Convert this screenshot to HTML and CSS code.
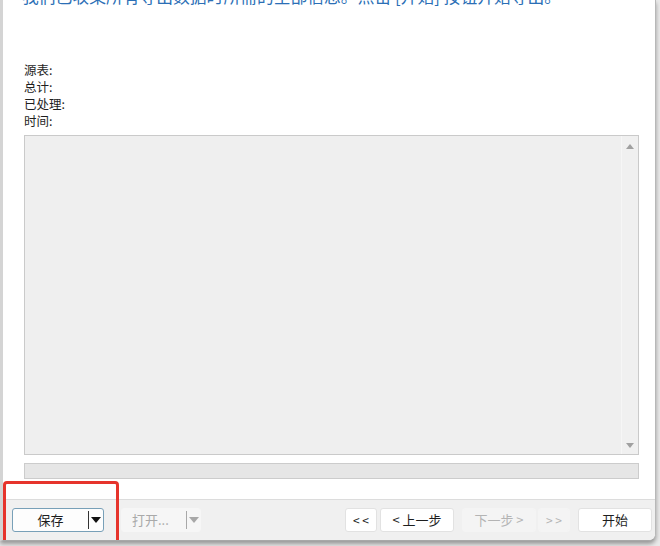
FILE: index.html
```html
<!DOCTYPE html>
<html lang="zh-CN">
<head>
    <meta charset="UTF-8">
    <title>导出向导</title>
    <link rel="stylesheet" href="styles.css">
</head>
<body>
    <!-- Wizard window -->
    <div class="window">
        <div class="content">
            <!-- Step description -->
            <p class="intro">我们已收集所有导出数据时所需的全部信息。点击 [开始] 按钮开始导出。</p>

            <!-- Export status -->
            <div class="status">
                <div class="status-line">源表:</div>
                <div class="status-line">总计:</div>
                <div class="status-line">已处理:</div>
                <div class="status-line">时间:</div>
            </div>

            <!-- Log output -->
            <div class="log-box">
                <div class="log-text"></div>
                <div class="scrollbar">
                    <span class="arrow arrow-up"></span>
                    <span class="arrow arrow-down"></span>
                </div>
            </div>

            <!-- Progress bar -->
            <div class="progress"></div>
        </div>

        <!-- Footer buttons -->
        <div class="footer">
            <div class="split-button">
                <span class="split-label">保存</span>
                <span class="split-arrow"><span class="caret"></span></span>
            </div>
            <div class="split-button disabled">
                <span class="split-label">打开...</span>
                <span class="split-arrow"><span class="caret"></span></span>
            </div>

            <div class="nav-buttons">
                <button class="btn btn-small">&lt; &lt;</button>
                <button class="btn">&lt; 上一步</button>
                <button class="btn btn-gap" disabled>下一步 &gt;</button>
                <button class="btn btn-small" disabled>&gt; &gt;</button>
                <button class="btn btn-start">开始</button>
            </div>
        </div>

        <!-- Highlight marker -->
        <div class="highlight"></div>
    </div>
</body>
</html>
```

FILE: styles.css
```css
/* Reset */
* {
    box-sizing: border-box;
    margin: 0;
    padding: 0;
}

body {
    font-family: "Noto Sans CJK SC", "Noto Sans", sans-serif;
    background-color: #e9e9e9;
    height: 546px;
    overflow: hidden;
}

/* Window frame */
.window {
    position: relative;
    width: 656px;
    height: 541px;
    background-color: #ffffff;
    border-left: 3px solid #d4d4d4;
    border-right: 1px solid #b8b8b8;
    border-bottom: 1px solid #a8a8a8;
    border-bottom-right-radius: 7px;
    box-shadow: 0 3px 4px rgba(0, 0, 0, 0.35);
    overflow: hidden;
}

.content {
    padding: 0 16px 0 21px;
}

/* Blue description line, cut off at top */
.intro {
    margin-top: -15px;
    margin-left: -2px;
    font-size: 16.8px;
    line-height: 22px;
    color: #2b6fb6;
    white-space: nowrap;
}

/* Status labels */
.status {
    margin-top: 54px;
    font-size: 12.5px;
    color: #1e1e1e;
}

.status-line {
    height: 17px;
    line-height: 17px;
}

/* Log area */
.log-box {
    display: flex;
    margin-top: 6px;
    height: 320px;
    background-color: #efefef;
    border: 1px solid #cacaca;
}

.log-text {
    flex: 1;
}

.scrollbar {
    width: 17px;
    display: flex;
    flex-direction: column;
    justify-content: space-between;
    align-items: center;
    padding: 8px 0 6px;
    background-color: #f0f0f0;
    border-left: 1px solid #f6f6f6;
}

.arrow {
    width: 0;
    height: 0;
    border-left: 4px solid transparent;
    border-right: 4px solid transparent;
}

.arrow-up {
    border-bottom: 5px solid #a0a0a0;
}

.arrow-down {
    border-top: 5px solid #a0a0a0;
}

/* Progress bar */
.progress {
    margin-top: 8px;
    height: 16px;
    background-color: #e6e6e6;
    border: 1px solid #cccccc;
}

/* Footer */
.footer {
    display: flex;
    align-items: center;
    margin-top: 20px;
    height: 41px;
    padding: 0 3px 1px 9px;
    background-color: #f0f0f0;
    border-top: 1px solid #dcdcdc;
}

.split-button {
    display: flex;
    align-items: stretch;
    width: 92px;
    height: 24px;
    background-color: #fdfdfd;
    border: 1px solid #78a0b8;
    border-radius: 3px;
    font-size: 13px;
    color: #1e1e1e;
}

.split-label {
    flex: 1;
    text-align: center;
    line-height: 22px;
}

.split-arrow {
    width: 15px;
    display: flex;
    align-items: center;
    justify-content: center;
    border-left: 1px solid #333333;
    margin: 2px 0;
}

.caret {
    width: 0;
    height: 0;
    border-left: 5px solid transparent;
    border-right: 5px solid transparent;
    border-top: 6px solid #111111;
}

.split-button.disabled {
    width: 80px;
    margin-left: 17px;
    background-color: #f6f6f6;
    border-color: #f6f6f6;
    color: #a9a9a9;
}

.split-button.disabled .split-label {
    text-align: left;
    padding-left: 10px;
}

.split-button.disabled .split-arrow {
    width: 14px;
    border-left-color: #a8a8a8;
}

.split-button.disabled .caret {
    border-top-color: #a8a8a8;
}

/* Navigation buttons */
.nav-buttons {
    display: flex;
    margin-left: auto;
}

.btn {
    width: 74px;
    height: 24px;
    margin-left: 3px;
    font-family: inherit;
    font-size: 13px;
    color: #1e1e1e;
    background-color: #ffffff;
    border: 1px solid #e2e2e2;
    border-radius: 3px;
}

.btn:disabled {
    color: #b4b4b4;
    background-color: #f4f4f4;
    border-color: #f4f4f4;
}

.btn-small {
    width: 32px;
    margin-left: 2px;
    font-size: 12px;
}

.btn-gap {
    margin-left: 8px;
}

.btn-start {
    margin-left: 8px;
}

/* Red highlight around save button */
.highlight {
    position: absolute;
    left: 0;
    top: 481px;
    width: 116px;
    height: 63px;
    border: 3px solid #e6342c;
    border-radius: 4px;
}
```
